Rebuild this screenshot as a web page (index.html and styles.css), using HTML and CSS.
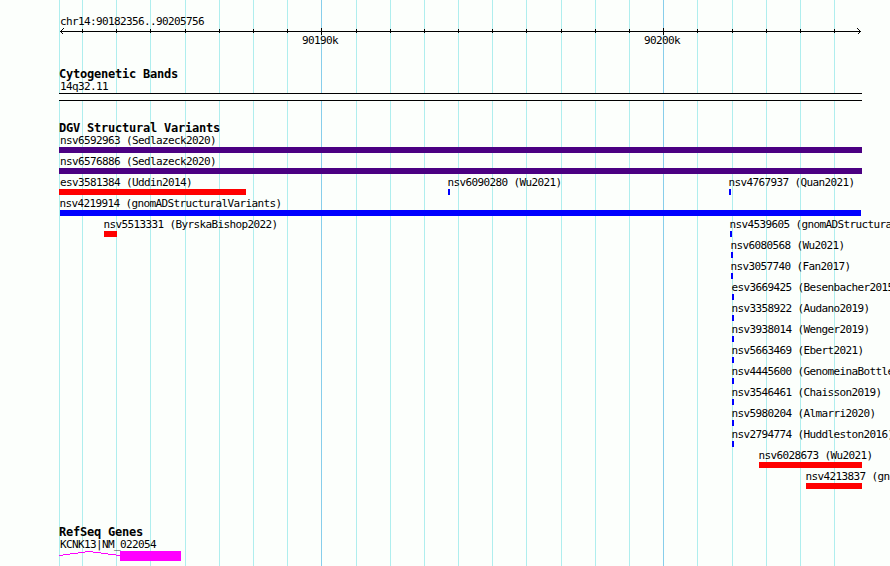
FILE: index.html
```html
<!DOCTYPE html>
<html lang="en">
<head>
    <title>chr14:90182356..90205756</title>
    <meta charset="UTF-8">
    <link rel="stylesheet" href="styles.css">
</head>
<body>
    <svg class="grid-lines" width="890" height="566" shape-rendering="crispEdges">
        <path class="minor" d="M59.5 0V566M82.5 0V566M116.5 0V566M150.5 0V566M185.5 0V566M219.5 0V566M253.5 0V566M287.5 0V566M356.5 0V566M390.5 0V566M424.5 0V566M458.5 0V566M492.5 0V566M526.5 0V566M561.5 0V566M595.5 0V566M629.5 0V566M697.5 0V566M732.5 0V566M766.5 0V566M800.5 0V566M834.5 0V566"/>
        <path class="major" d="M321.5 0V566M663.5 0V566"/>
    </svg>
    <main class="browser">
        <section class="ruler">
            <div class="label">chr14:90182356..90205756</div>
            <svg class="axis" width="803" height="9" shape-rendering="crispEdges">
                <path d="M1 4.5H802M23.5 2V6M57.5 2V6M91.5 2V6M126.5 2V6M160.5 2V6M194.5 2V6M228.5 2V6M262.5 1V8M297.5 2V6M331.5 2V6M365.5 2V6M399.5 2V6M433.5 2V6M467.5 2V6M502.5 2V6M536.5 2V6M570.5 2V6M604.5 1V8M638.5 2V6M673.5 2V6M707.5 2V6M741.5 2V6M775.5 2V6"/>
                <path class="arrow" d="M4.5 1.5L1.5 4.5L4.5 7.5M798.5 1.5L801.5 4.5L798.5 7.5"/>
            </svg>
            <div class="row scale">
                <span class="label" style="margin-left: 242px">90190k</span>
                <span class="label" style="margin-left: 584px">90200k</span>
            </div>
        </section>

        <section class="bands">
            <h2>Cytogenetic Bands</h2>
            <div class="label">14q32.11</div>
            <div class="band"></div>
        </section>

        <section class="variants">
            <h2>DGV Structural Variants</h2>
            <div class="row">
                <div class="feature complex wide" style="margin-left: 0px; --len: 803px"><span class="label">nsv6592963 (Sedlazeck2020)</span></div>
            </div>
            <div class="row">
                <div class="feature complex wide" style="margin-left: 0px; --len: 803px"><span class="label">nsv6576886 (Sedlazeck2020)</span></div>
            </div>
            <div class="row">
                <div class="feature loss wide" style="margin-left: 0px; --len: 187px"><span class="label">esv3581384 (Uddin2014)</span></div>
                <div class="feature gain" style="margin-left: 389px; --len: 2px"><span class="label">nsv6090280 (Wu2021)</span></div>
                <div class="feature gain" style="margin-left: 670px; --len: 2px"><span class="label">nsv4767937 (Quan2021)</span></div>
            </div>
            <div class="row">
                <div class="feature gain" style="margin-left: 1px; --len: 801px"><span class="label">nsv4219914 (gnomADStructuralVariants)</span></div>
            </div>
            <div class="row">
                <div class="feature loss" style="margin-left: 45px; --len: 13px"><span class="label">nsv5513331 (ByrskaBishop2022)</span></div>
                <div class="feature gain" style="margin-left: 671px; --len: 2px"><span class="label">nsv4539605 (gnomADStructuralVariants)</span></div>
            </div>
            <div class="row">
                <div class="feature gain" style="margin-left: 672px; --len: 2px"><span class="label">nsv6080568 (Wu2021)</span></div>
            </div>
            <div class="row">
                <div class="feature gain" style="margin-left: 672px; --len: 2px"><span class="label">nsv3057740 (Fan2017)</span></div>
            </div>
            <div class="row">
                <div class="feature gain" style="margin-left: 673px; --len: 2px"><span class="label">esv3669425 (Besenbacher2015)</span></div>
            </div>
            <div class="row">
                <div class="feature gain" style="margin-left: 673px; --len: 2px"><span class="label">nsv3358922 (Audano2019)</span></div>
            </div>
            <div class="row">
                <div class="feature gain" style="margin-left: 673px; --len: 2px"><span class="label">nsv3938014 (Wenger2019)</span></div>
            </div>
            <div class="row">
                <div class="feature gain" style="margin-left: 673px; --len: 2px"><span class="label">nsv5663469 (Ebert2021)</span></div>
            </div>
            <div class="row">
                <div class="feature gain" style="margin-left: 673px; --len: 2px"><span class="label">nsv4445600 (GenomeinaBottle)</span></div>
            </div>
            <div class="row">
                <div class="feature gain" style="margin-left: 673px; --len: 2px"><span class="label">nsv3546461 (Chaisson2019)</span></div>
            </div>
            <div class="row">
                <div class="feature gain" style="margin-left: 673px; --len: 2px"><span class="label">nsv5980204 (Almarri2020)</span></div>
            </div>
            <div class="row">
                <div class="feature gain" style="margin-left: 673px; --len: 2px"><span class="label">nsv2794774 (Huddleston2016)</span></div>
            </div>
            <div class="row">
                <div class="feature loss" style="margin-left: 700px; --len: 103px"><span class="label">nsv6028673 (Wu2021)</span></div>
            </div>
            <div class="row">
                <div class="feature loss" style="margin-left: 747px; --len: 56px"><span class="label">nsv4213837 (gnomADStructuralVariants)</span></div>
            </div>
        </section>

        <section class="genes">
            <h2>RefSeq Genes</h2>
            <div class="label">KCNK13|NM_022054</div>
            <svg class="gene" width="123" height="10" shape-rendering="crispEdges">
                <path d="M0 4.5L30 0.5L61 4.5"/>
                <rect x="61" y="0" width="61" height="10"/>
            </svg>
        </section>
    </main>
</body>
</html>
```

FILE: styles.css
```css
body {
    margin: 0;
    width: 890px;
    height: 566px;
    overflow: hidden;
    background: #fcfffc;
    color: #000;
    font-family: "DejaVu Sans Mono", monospace;
    font-size: 11px;
    line-height: 13px;
}
svg {
    display: block;
    fill: none;
}
/* guide lines run behind all tracks */
.grid-lines {
    position: absolute;
    top: 0;
    left: 0;
    z-index: -1;
}
.minor {
    stroke: #afeeee;
}
.major {
    stroke: #87ceeb;
}
.browser {
    width: 831px;
    overflow: hidden;
    padding: 15px 0 0 59px;
}
h2 {
    height: 12px;
    margin: 0;
    font-size: 12px;
    line-height: 13px;
    letter-spacing: -0.224px;
    font-weight: bold;
}
.label {
    display: block;
    height: 12px;
    padding-left: 1px;
    letter-spacing: -0.622px;
    white-space: nowrap;
}
.row {
    display: grid;
    justify-items: start;
    height: 21px;
}
.row > * {
    grid-area: 1 / 1;
}
.axis {
    stroke: #000;
}
.scale {
    height: 12px;
    margin-top: -2px;
}
.bands {
    margin-top: 22px;
}
.band {
    width: 803px;
    height: 6px;
    margin-top: 1px;
    border-top: 1px solid #000;
    border-bottom: 1px solid #000;
    background: #fcfffc;
}
.variants {
    margin-top: 21px;
}
.feature::after {
    content: "";
    display: block;
    width: var(--len);
    height: 6px;
    margin-top: 1px;
    background: var(--color);
}
.feature .label {
    padding-left: 0;
    margin-left: -0.5px;
}
.feature.wide .label {
    margin-left: 1px;
}
.complex {
    --color: #4b0082;
}
.loss {
    --color: #f00;
}
.gain {
    --color: #00f;
}
.genes {
    margin-top: 35px;
}
.gene {
    margin-top: 1px;
    stroke: #f0f;
}
.gene rect {
    fill: #f0f;
    stroke: none;
}
```
